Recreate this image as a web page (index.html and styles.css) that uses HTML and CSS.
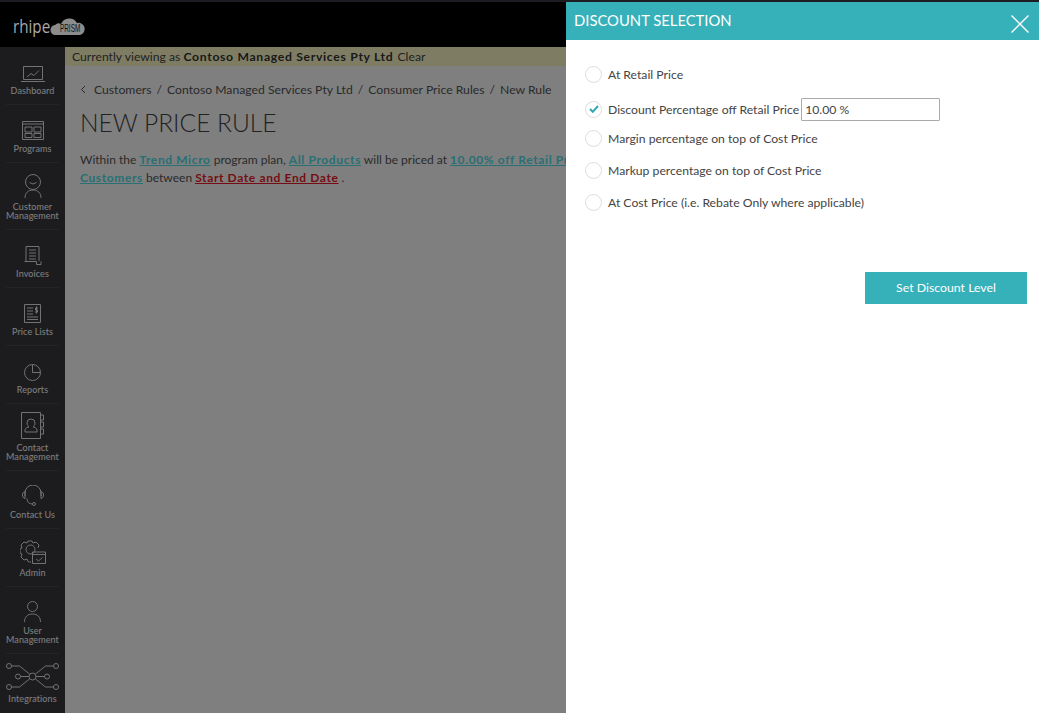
FILE: index.html
```html
<!DOCTYPE html>
<html lang="en">
<head>
    <meta charset="UTF-8">
    <meta name="viewport" content="width=device-width, initial-scale=1.0">
    <title>New Price Rule</title>
    <link rel="stylesheet" href="styles.css">
</head>
<body>

    <header class="topbar">
        <span class="brand">rhipe</span>
        <span class="cloud">
            <svg width="36" height="19" viewBox="0 0 36 19"><path d="M6 19a5 5 0 0 1-1-10 5 5 0 0 1 6-1 9 9 0 0 1 16-1 6 6 0 0 1 3 12z" fill="#8c8c8c"/></svg>
            <span class="cloud-text">PRISM</span>
        </span>
    </header>

    <div class="layout">
        <nav class="sidebar">
            <a class="nav-item">
                <svg class="nav-icon" width="24" height="16" viewBox="0 0 24 16"><path d="M2.500.5h19v13h-19zM0 15.500h24M6 11l4-3.500 3 2 5-5"/></svg>
                <span>Dashboard</span>
            </a>
            <a class="nav-item">
                <svg class="nav-icon" width="22" height="19" viewBox="0 0 22 19"><path d="M.5.5h21v18h-21zM.5 3h21M3 6h7v5h-7zM12 6h7v5h-7zM3 12.500h7v4h-7zM12 12.500h7v4h-7z"/></svg>
                <span>Programs</span>
            </a>
            <a class="nav-item nav-tall">
                <svg class="nav-icon" width="18" height="24" viewBox="0 0 18 24"><circle cx="9" cy="8" r="7.500"/><path d="M5.500 8.500q3.500 3 7 0M1 24c0-5 3-8 8-8s8 3 8 8"/></svg>
                <span>Customer<br>Management</span>
            </a>
            <a class="nav-item">
                <svg class="nav-icon" width="18" height="19" viewBox="0 0 18 19"><path d="M2 15V.5h13v14.500M.5 15.500h12v3h4.500v-3M5 4h7M5 7h7M5 10h7M5 13h7"/></svg>
                <span>Invoices</span>
            </a>
            <a class="nav-item">
                <svg class="nav-icon" width="17" height="19" viewBox="0 0 17 19"><path d="M.5.5h16v18h-16zM3 4h6M3 7h6M3 10h6M3 13h11M3 15.500h11M12.500 2.500v7M14 4h-2.500v2h2v2h-2.500"/></svg>
                <span>Price Lists</span>
            </a>
            <a class="nav-item">
                <svg class="nav-icon" width="17" height="17" viewBox="0 0 17 17"><circle cx="8.500" cy="8.500" r="8"/><path d="M8.500.5v8h8"/></svg>
                <span>Reports</span>
            </a>
            <a class="nav-item nav-tall">
                <svg class="nav-icon" width="23" height="27" viewBox="0 0 23 27"><path d="M.5.500h19v26h-19zM19.500 3h3v5h-3M19.500 10h3v5h-3M19.500 17h3v5h-3M4 20v-2c0-2 3-3 4-3-1-1-2-2-2-4a4 4 0 0 1 8 0c0 2-1 3-2 4 1 0 4 1 4 3v2z"/></svg>
                <span>Contact<br>Management</span>
            </a>
            <a class="nav-item">
                <svg class="nav-icon" width="22" height="21" viewBox="0 0 22 21"><path d="M3 11V8a8 8 0 0 1 16 0v3M3 6.500c-3.500 1-3.500 6 0 7M19 6.500c3.500 1 3.500 6 0 7M3 6.500v7M19 6.500v7M5 13.500c0 3.500 2 5.500 5.500 5.500"/><circle cx="12" cy="19" r="1.500"/></svg>
                <span>Contact Us</span>
            </a>
            <a class="nav-item">
                <svg class="nav-icon" width="26" height="26" viewBox="0 0 26 26"><path d="M11 24c-1 0-2 0-3-.5l-1-2.500-3 1-3-3 1-3-2-1v-4l2-1-1-3 3-3 3 1 1-2h4l1 2 3-1 3 3-1 3"/><circle cx="10.500" cy="11.500" r="4.500"/><path d="M12.500 14h13v11.500h-13zM12.500 16.500h13M16 21l2.500 2 4-3.500"/></svg>
                <span>Admin</span>
            </a>
            <a class="nav-item nav-tall">
                <svg class="nav-icon" width="17" height="21" viewBox="0 0 17 21"><circle cx="8.500" cy="5.500" r="5"/><path d="M.5 21c0-5 3-8 8-8s8 3 8 8"/></svg>
                <span>User<br>Management</span>
            </a>
            <a class="nav-item nav-last">
                <svg class="nav-icon" width="53" height="27" viewBox="0 0 53 27"><circle cx="3" cy="3" r="2.500"/><circle cx="3" cy="24" r="2.500"/><circle cx="50" cy="3" r="2.500"/><circle cx="50" cy="24" r="2.500"/><circle cx="12" cy="13.500" r="2.500"/><circle cx="41" cy="13.500" r="2.500"/><circle cx="26.500" cy="13.500" r="3.500"/><path d="M5.500 3h8l10 8M5.500 24h8l10-8M47.500 3h-8l-10 8M47.500 24h-8l-10-8M14.500 13.500h8.500M30 13.500h8.500"/></svg>
                <span>Integrations</span>
            </a>
        </nav>

        <main class="content">
            <div class="viewing-bar">Currently viewing as <b>Contoso Managed Services Pty Ltd</b> Clear</div>
            <div class="page">
                <div class="breadcrumb">
                    <svg width="6" height="9" viewBox="0 0 6 9"><path d="M5 1L1.500 4.500 5 8" fill="none" stroke="#555" stroke-width="1"/></svg>
                    <span class="crumb-first">Customers</span><i>/</i><span>Contoso Managed Services Pty Ltd</span><i>/</i><span>Consumer Price Rules</span><i>/</i><span>New Rule</span>
                </div>
                <h1>NEW PRICE RULE</h1>
                <p class="rule-text">Within the <a class="link">Trend Micro</a> program plan, <a class="link">All Products</a> will be priced at <a class="link">10.00% off Retail Price</a> for <a class="link">All Customers</a> between <a class="link link-red">Start Date and End Date</a> .</p>
            </div>
        </main>
    </div>

    <div class="overlay"></div>

    <aside class="panel">
        <div class="panel-header">
            <h2>DISCOUNT SELECTION</h2>
            <svg class="panel-close" width="18" height="18" viewBox="0 0 18 18"><path d="M.5.5l17 17M17.500.5l-17 17" stroke="#fff" stroke-width="1.400" fill="none"/></svg>
        </div>
        <div class="options">
            <label class="option option-first"><span class="radio"></span>At Retail Price</label>
            <label class="option option-input">
                <span class="radio"><svg width="10" height="8" viewBox="0 0 10 8"><path d="M1 4l2.800 2.800L9 1" fill="none" stroke="#2fa9b2" stroke-width="2"/></svg></span>
                Discount Percentage off Retail Price
                <input class="percent" type="text" value="10.00 %">
            </label>
            <label class="option"><span class="radio"></span>Margin percentage on top of Cost Price</label>
            <label class="option"><span class="radio"></span>Markup percentage on top of Cost Price</label>
            <label class="option"><span class="radio"></span>At Cost Price (i.e. Rebate Only where applicable)</label>
        </div>
        <div class="panel-actions">
            <button class="set-btn">Set Discount Level</button>
        </div>
    </aside>

</body>
</html>
```

FILE: styles.css
```css
body {
    font-family: Lato, Arial, sans-serif;
    margin: 0;
    height: 713px;
    overflow: hidden;
    position: relative;
    background: #fff;
    color: #555;
}

.topbar {
    height: 47px;
    background: #000;
    border-top: 2px solid #1c1c22;
    display: flex;
    align-items: center;
    padding-left: 13px;
    box-sizing: border-box;
    position: relative;
    z-index: 1;
}

.brand {
    font-family: "Open Sans", sans-serif;
    font-size: 19px;
    color: #a8a8a8;
    transform: scaleX(0.8);
    transform-origin: left;
    width: 37px;
    margin-top: 3px;
}

.cloud {
    position: relative;
    display: flex;
    margin-top: 1px;
}

.cloud-text {
    position: absolute;
    left: 10px;
    top: 7px;
    font-family: "Liberation Sans", sans-serif;
    font-size: 11px;
    line-height: 11px;
    color: #111;
    transform: scaleX(0.58);
    transform-origin: left;
}

.layout {
    display: flex;
    height: 666px;
}

.sidebar {
    width: 65px;
    flex: none;
    background: #38393d;
    box-sizing: border-box;
    padding-top: 11px;
    overflow: hidden;
}

.nav-item {
    display: flex;
    flex-direction: column;
    align-items: center;
    justify-content: flex-end;
    height: 58px;
    box-sizing: border-box;
    margin: 0 6px 0 6px;
    padding-bottom: 9px;
    border-bottom: 1px solid #47484c;
    color: #fff;
    font-size: 9px;
    line-height: 9px;
    text-align: center;
    letter-spacing: 0.1px;
    white-space: nowrap;
}

.nav-item:first-child {
    height: 47px;
}

.nav-tall {
    height: 67px;
}

.nav-last {
    border-bottom: none;
}

.nav-icon {
    fill: none;
    stroke: #e4e4e4;
    stroke-width: 1;
    margin-bottom: 4px;
    flex: none;
}

.content {
    flex: 1;
    min-width: 0;
    font-size: 12.2px;
}

.viewing-bar {
    height: 19px;
    line-height: 19px;
    background: #fdfbc8;
    padding-left: 7px;
    font-size: 12.2px;
    color: #444;
    white-space: nowrap;
}

.viewing-bar b {
    letter-spacing: 0.68px;
    color: #333;
    margin-right: 1px;
}

.page {
    padding: 14px 15px;
}

.breadcrumb {
    display: flex;
    align-items: center;
    height: 18px;
    white-space: nowrap;
}

.breadcrumb i {
    font-style: normal;
    margin: 0 5px;
}

.crumb-first {
    margin-left: 8px;
}

h1 {
    font-family: Lato, sans-serif;
    font-weight: 300;
    font-size: 24.6px;
    line-height: 30px;
    margin: 10px 0 13px;
    color: #444;
}

.rule-text {
    margin: 0;
    width: 600px;
    line-height: 18px;
    font-size: 12px;
}

.link {
    font-weight: 700;
    letter-spacing: 0.62px;
    color: #50e0e8;
    text-decoration: underline;
}

.link-red {
    color: #ee1a26;
}

.overlay {
    position: absolute;
    inset: 0;
    background: rgba(0, 0, 0, 0.5);
}

.panel {
    position: absolute;
    top: 2px;
    right: 0;
    bottom: 0;
    width: 473px;
    background: #fff;
    z-index: 2;
}

.panel-header {
    height: 38px;
    background: #36b0b9;
    color: #fff;
    display: flex;
    align-items: center;
    justify-content: space-between;
    padding: 0 10px 0 8px;
}

.panel-header h2 {
    font-size: 14.8px;
    font-weight: 400;
    margin: 0 0 2px;
}

.panel-close {
    margin-top: 5px;
}

.options {
    padding: 0 19px;
    font-size: 12.2px;
    color: #444;
}

.option {
    display: flex;
    align-items: center;
    height: 32px;
    white-space: nowrap;
}

.option-first {
    margin-top: 18px;
}

.option-input {
    padding-top: 6px;
    box-sizing: border-box;
}

.radio {
    width: 17px;
    height: 17px;
    box-sizing: border-box;
    border: 1px solid #ddd;
    border-radius: 50%;
    margin-right: 6px;
    display: flex;
    align-items: center;
    justify-content: center;
    flex: none;
}

.percent {
    font: inherit;
    color: #444;
    width: 139px;
    height: 23px;
    box-sizing: border-box;
    border: 1px solid #aaa;
    border-radius: 1px;
    padding: 0 3px;
    margin-left: 2px;
}

.panel-actions {
    display: flex;
    justify-content: flex-end;
    padding: 54px 12px 0 0;
}

.set-btn {
    width: 162px;
    height: 32px;
    background: #36b0b9;
    color: #fff;
    border: none;
    font-family: inherit;
    font-size: 12.3px;
    padding-bottom: 3px;
    cursor: pointer;
}
```
